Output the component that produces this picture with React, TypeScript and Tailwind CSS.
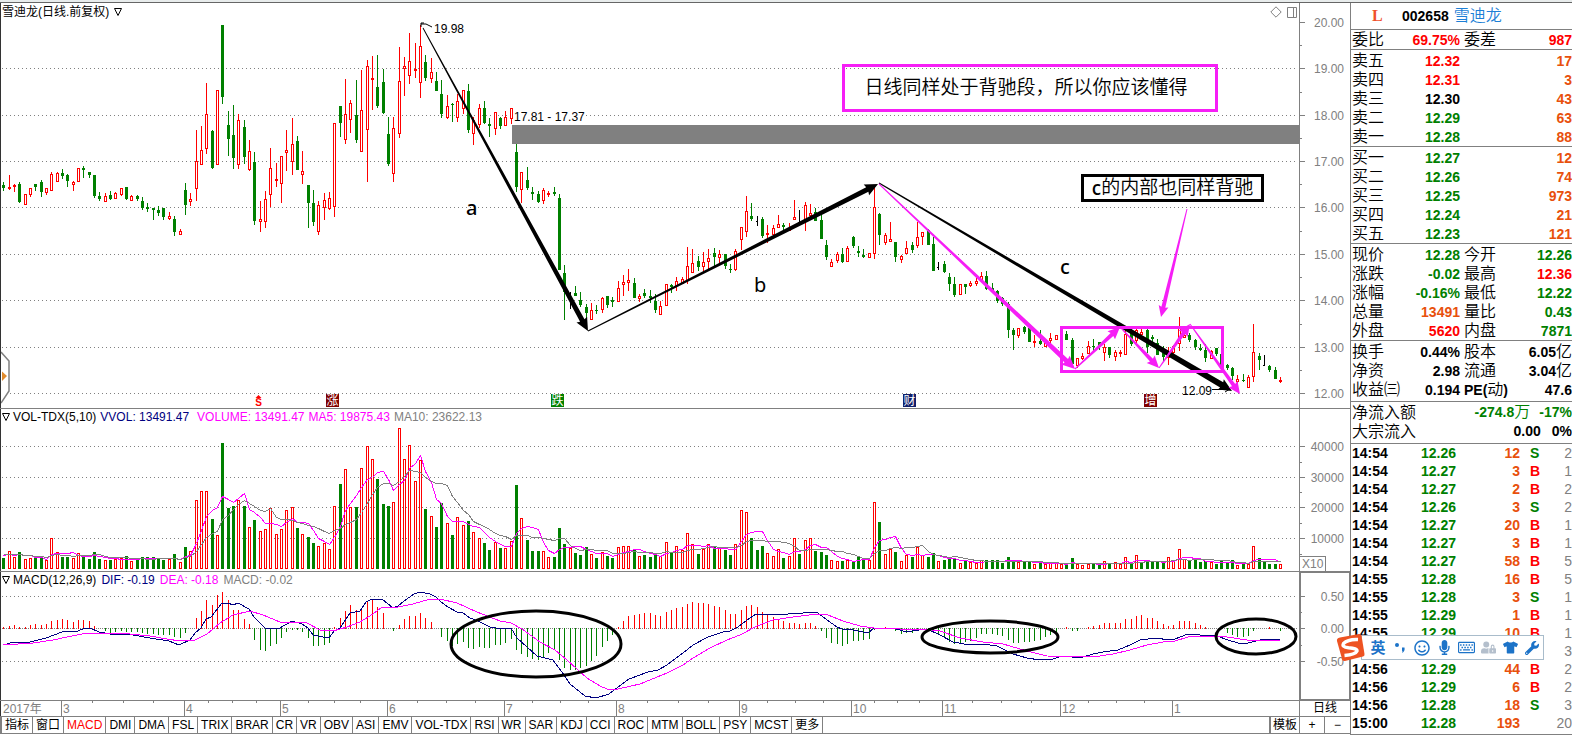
import React from 'react';
import { FaMicrophone, FaRegKeyboard, FaRegSmile, FaTshirt, FaUserLock, FaWrench } from 'react-icons/fa';

const RED = '#ff0000';
const GREEN = '#008000';
const GRAY = '#808080';
const PINK = '#f61ef6';

// one entry per day: kind, high, body top, body bottom, low
// r = rising (hollow), g = falling (filled), k = unchanged
const CANDLES = `
g 182 185 188 191;r 175 187 188 190;r 184 185 186 192;g 182 184 202 203;r 194 194 204 204;r 188 188 194 197;g 184 184 187 191;g 180 182 192 197;
r 188 188 192 195;r 172 174 190 191;r 172 173 181 181;g 169 173 176 179;g 174 175 181 187;r 181 182 184 191;r 168 168 181 181;g 166 168 170 178;
g 172 172 175 178;g 175 175 196 198;g 192 196 199 201;r 193 196 201 201;g 191 195 199 200;r 192 193 198 199;r 188 188 194 196;g 187 187 199 200;
r 195 196 200 200;g 195 196 199 201;g 197 201 208 210;g 203 207 209 212;g 208 208 210 220;g 206 210 213 216;g 208 208 217 220;r 212 216 218 220;
g 216 219 232 236;r 229 231 234 234;g 183 190 205 215;r 193 199 201 206;r 130 161 188 201;r 126 150 164 164;r 83 114 148 154;g 130 131 168 169;
r 90 90 164 164;g 25 25 97 104;g 111 125 139 156;g 105 135 158 169;r 114 120 164 169;g 120 127 157 164;r 140 151 169 171;g 152 162 221 225;
r 201 219 221 232;r 191 199 221 228;r 148 168 194 207;r 163 179 180 187;r 156 156 183 203;r 130 150 152 171;r 118 144 161 175;g 136 141 170 170;
r 151 171 174 184;g 185 185 203 228;g 190 203 222 226;r 201 205 231 235;r 193 200 207 220;r 192 198 208 210;r 123 123 206 217;g 106 106 123 137;
r 79 114 139 144;r 100 103 119 133;g 80 115 140 143;r 70 110 151 151;r 60 66 129 182;r 56 78 79 110;g 55 87 106 108;g 69 82 113 114;
g 117 134 164 166;r 117 128 173 182;r 47 81 133 138;r 57 66 68 96;r 33 61 75 84;r 43 69 70 78;r 25 46 82 98;g 55 62 78 81;
r 58 72 78 83;g 72 81 91 91;g 80 94 114 118;r 95 106 117 119;g 103 104 105 122;r 94 101 117 122;r 90 90 108 114;g 84 91 130 133;
r 117 120 133 145;r 104 108 124 128;g 101 108 123 124;g 118 124 126 137;r 112 112 128 135;g 117 118 126 129;r 111 117 125 125;r 108 108 118 124;
g 144 152 187 192;r 172 172 189 203;g 167 180 188 190;g 187 192 194 200;g 191 194 202 203;r 188 190 200 204;r 191 193 194 197;g 187 192 194 196;
g 194 198 270 270;g 265 273 292 320;k 292 299 300 309;g 286 293 296 296;g 292 300 305 307;g 304 307 313 321;r 303 310 319 319;g 305 310 311 314;
r 297 298 309 313;g 296 296 305 308;g 297 300 302 307;r 281 288 301 301;r 275 282 284 296;r 269 280 282 291;g 278 283 298 298;r 294 296 298 302;
g 289 293 296 298;g 290 296 298 303;g 294 301 310 313;r 301 306 314 314;r 284 284 305 305;g 284 285 287 293;r 277 281 285 291;r 277 279 283 283;
r 247 266 280 284;r 249 263 272 272;g 256 261 267 271;r 252 262 266 272;r 249 258 261 270;g 248 253 257 266;r 250 254 257 263;g 254 254 266 269;
g 264 269 270 273;r 249 251 269 271;r 227 227 239 250;r 196 211 231 237;g 203 216 219 221;k 216 221 222 226;g 217 219 236 238;r 225 233 234 243;
r 225 228 234 236;r 215 224 227 228;g 223 225 227 230;r 223 228 230 231;r 200 217 219 220;k 210 222 223 225;r 202 205 219 231;r 204 213 215 217;
g 208 212 221 221;g 215 220 239 239;g 240 245 257 260;r 259 262 266 267;r 252 254 260 263;g 248 254 262 263;r 246 248 261 262;g 236 237 246 248;
g 246 251 253 257;g 249 255 257 258;r 253 253 257 258;r 187 207 253 259;g 213 214 235 245;r 233 235 242 245;r 222 239 241 242;g 242 242 257 262;
r 255 256 259 263;r 241 248 253 254;g 242 245 250 253;r 222 237 245 248;r 232 232 236 245;g 229 230 245 245;g 237 244 271 271;k 262 267 268 270;
g 261 264 272 273;g 273 277 284 291;g 277 284 295 297;r 284 284 294 295;g 284 284 287 294;r 281 283 285 287;r 278 281 283 286;r 272 276 280 281;
g 271 276 289 290;g 283 288 291 293;g 290 291 301 303;g 297 298 304 306;g 302 304 330 338;g 328 330 335 350;r 328 328 335 338;g 326 327 332 334;
g 327 328 342 342;r 335 341 342 347;g 330 341 344 345;r 340 343 346 347;r 333 338 340 344;r 335 335 339 340;r 336 337 338 339;g 331 334 340 340;
g 338 340 364 366;r 358 358 365 368;r 353 356 358 360;r 341 346 353 354;g 339 346 347 352;g 342 342 347 350;r 344 347 352 361;g 347 347 355 358;
r 350 352 356 361;r 350 352 353 357;r 330 334 354 355;g 328 331 344 346;r 328 330 340 346;r 328 332 334 336;g 328 330 347 353;g 335 337 339 345;
g 339 343 355 355;g 346 353 357 362;r 347 353 357 365;r 345 346 352 355;r 317 328 343 351;r 330 335 337 338;g 333 335 340 342;g 339 340 347 350;
g 344 348 350 351;g 344 350 358 362;r 350 351 358 358;g 348 348 354 356;g 353 354 366 370;g 364 365 368 370;g 367 368 376 380;r 375 379 381 384;
g 374 380 381 382;r 375 377 387 387;r 324 352 376 382;g 353 356 360 370;k 355 365 366 366;g 365 366 370 372;g 367 370 379 379;r 377 380 381 383`
  .trim()
  .split(';')
  .map((row) => {
    const [kind, ...ys] = row.trim().split(' ');
    const [high, top, bottom, low] = ys.map(Number);
    return { kind, high, top, bottom, low };
  });

const VOLUMES = [
  558, 551, 557, 552, 559, 558, 558, 558, 560, 538, 552, 557, 557, 558, 553, 555, 559, 552, 559, 560, 560, 559, 558, 556,
  561, 560, 557, 557, 557, 559, 560, 559, 554, 562, 547, 551, 500, 491, 491, 519, 535, 443, 508, 506, 500, 506, 527, 520,
  531, 529, 508, 534, 529, 510, 507, 528, 534, 537, 543, 546, 543, 549, 506, 484, 469, 507, 507, 468, 446, 459, 479, 504,
  506, 502, 428, 459, 445, 481, 460, 509, 516, 527, 503, 523, 535, 517, 525, 521, 532, 538, 543, 550, 542, 548, 548, 541,
  485, 518, 540, 551, 551, 551, 557, 557, 528, 544, 548, 553, 555, 547, 554, 558, 552, 556, 558, 547, 546, 546, 550, 556,
  555, 557, 554, 556, 542, 553, 546, 550, 533, 544, 554, 549, 544, 547, 548, 550, 555, 544, 510, 512, 538, 550, 546, 553,
  556, 549, 558, 556, 538, 554, 540, 538, 551, 552, 555, 560, 561, 561, 560, 561, 556, 558, 560, 502, 522, 554, 549, 552,
  561, 555, 557, 547, 555, 557, 553, 561, 560, 559, 559, 563, 561, 562, 563, 560, 560, 560, 560, 563, 557, 560, 562, 562,
  562, 564, 562, 564, 563, 563, 564, 564, 558, 564, 565, 564, 564, 564, 561, 563, 562, 564, 557, 563, 555, 562, 562, 562,
  562, 562, 557, 560, 549, 559, 561, 560, 562, 561, 562, 564, 561, 563, 560, 565, 564, 564, 546, 558, 562, 564, 564, 564,
];

// unchanged days still get a coloured volume bar
const VOLUME_KIND: Record<number, string> = { 106: 'r', 141: 'g', 149: 'g', 175: 'r', 213: 'g', 236: 'g' };

const MACD_BARS = [
  627, 626, 625, 627, 627, 625, 624, 625, 624, 621, 620, 619, 620, 622, 620, 620, 621, 626, 628, 630, 632, 631, 630, 631,
  631, 631, 632, 633, 633, 634, 634, 634, 636, 637, 632, 628, 618, 611, 600, 605, 595, 592, 600, 610, 610, 619, 624, 639,
  649, 650, 645, 643, 637, 631, 629, 629, 631, 637, 645, 645, 644, 642, 627, 618, 611, 605, 610, 610, 601, 600, 607, 613,
  628, 630, 625, 619, 616, 616, 613, 618, 622, 628, 636, 640, 645, 643, 641, 647, 648, 646, 647, 647, 644, 644, 642, 638,
  649, 653, 656, 658, 659, 656, 652, 649, 659, 667, 669, 669, 667, 665, 660, 655, 646, 640, 634, 627, 621, 616, 615, 614,
  613, 613, 615, 616, 612, 610, 608, 607, 604, 602, 603, 603, 604, 606, 607, 610, 614, 614, 610, 606, 605, 607, 612, 615,
  617, 619, 621, 623, 623, 624, 623, 623, 626, 630, 637, 642, 643, 645, 643, 640, 640, 639, 638, 629, 628, 627, 628, 630,
  633, 632, 632, 630, 628, 630, 632, 634, 637, 641, 643, 642, 641, 640, 637, 633, 633, 633, 634, 635, 639, 642, 642, 641,
  641, 640, 639, 636, 634, 631, 628, 627, 630, 630, 628, 627, 626, 625, 623, 623, 623, 623, 619, 619, 616, 615, 618, 618,
  621, 624, 626, 625, 621, 621, 621, 623, 625, 627, 628, 628, 628, 632, 634, 636, 636, 635, 630, 628, 628, 627, 628, 630,
];

const DIF =
  '3,645 14,642 30,642 46,638 62,632 78,631 85,628 90,628 99,632 110,634 133,635 150,638 169,641 179,645 190,640 195,633 201,628 206,619 211,617 222,603 228,603 233,605 238,603 249,609 254,617 265,628 278,629 292,621 302,624 308,628 313,635 323,637 329,638 334,631 340,628 350,613 360,611 366,602 372,599 382,599 393,608 398,606 404,601 414,594 420,592 430,594 436,597 441,602 448,607 457,612 463,613 470,618 478,621 490,627 502,629 511,628 517,638 527,647 537,656 553,660 564,675 570,684 585,696 596,698 609,694 617,688 629,679 648,672 658,670 667,665 683,653 693,645 708,637 723,632 730,631 738,627 747,620 756,614 767,615 788,614 803,613 810,612 818,613 827,620 837,627 842,629 853,630 868,633 874,628 893,628 903,631 912,631 927,629 940,635 953,642 970,645 983,644 997,646 1013,654 1027,658 1040,660 1053,659 1062,656 1072,657 1083,657 1093,654 1103,652 1118,650 1130,645 1140,640 1157,638 1168,640 1175,639 1188,634 1200,635 1217,636 1228,640 1238,643 1248,643 1260,640 1272,639 1280,640';

const DEA =
  '3,645 33,643 53,640 67,637 87,633 107,633 130,634 150,636 167,639 180,641 195,640 207,634 220,623 233,615 250,611 263,615 280,622 307,623 320,630 333,631 347,627 360,622 373,614 382,607 398,607 413,604 430,599 440,599 457,603 477,612 500,621 511,623 522,629 540,642 555,650 567,660 587,678 600,686 607,689 618,689 640,684 667,673 683,665 693,658 710,648 727,640 740,635 757,626 773,620 793,617 817,614 828,615 843,621 860,626 874,628 900,629 923,629 940,631 960,638 983,642 1003,644 1027,651 1047,656 1093,657 1113,654 1130,650 1147,645 1163,642 1175,641 1188,637 1203,636 1227,637 1247,640 1280,640';

const MONTHS: [number, string][] = [
  [61, '3'], [184, '4'], [280, '5'], [387, '6'], [504, '7'], [616, '8'],
  [739, '9'], [851, '10'], [942, '11'], [1060, '12'], [1172, '1'],
];

const WEEK_TICKS = [
  92, 123, 153, 208, 232, 256, 308, 334, 360, 417, 446, 475, 532, 560, 588, 647, 678, 708,
  767, 795, 823, 874, 897, 919, 972, 1001, 1031, 1088, 1116, 1144,
];

const PRICE_GRID: [number, string][] = [
  [22, '20.00'], [68, '19.00'], [115, '18.00'], [161, '17.00'], [207, '16.00'],
  [254, '15.00'], [300, '14.00'], [347, '13.00'], [393, '12.00'],
];
const VOLUME_GRID: [number, string][] = [[446, '40000'], [477, '30000'], [507, '20000'], [538, '10000']];
const MACD_GRID: [number, string][] = [[596, '0.50'], [628, '0.00'], [661, '-0.50']];

const INDICATORS = [
  '指标', '窗口', 'MACD', 'DMI', 'DMA', 'FSL', 'TRIX', 'BRAR', 'CR', 'VR', 'OBV', 'ASI', 'EMV', 'VOL-TDX',
  'RSI', 'WR', 'SAR', 'KDJ', 'CCI', 'ROC', 'MTM', 'BOLL', 'PSY', 'MCST', '更多',
];

type Quote = [string, string, string, string?, string?, string?];

const R = 'text-[#ff0000]';
const G = 'text-[#008000]';
const O = 'text-[#e8500c]';
const K = 'text-black';

const COMMISSION: Quote[] = [['委比', '69.75%', R, '委差', '987', R]];
const ASKS: Quote[] = [
  ['卖五', '12.32', R, '', '17', O],
  ['卖四', '12.31', R, '', '3', O],
  ['卖三', '12.30', K, '', '43', O],
  ['卖二', '12.29', G, '', '63', O],
  ['卖一', '12.28', G, '', '88', O],
];
const BIDS: Quote[] = [
  ['买一', '12.27', G, '', '12', O],
  ['买二', '12.26', G, '', '74', O],
  ['买三', '12.25', G, '', '973', O],
  ['买四', '12.24', G, '', '21', O],
  ['买五', '12.23', G, '', '121', O],
];
const SUMMARY: Quote[] = [
  ['现价', '12.28', G, '今开', '12.26', G],
  ['涨跌', '-0.02', G, '最高', '12.36', R],
  ['涨幅', '-0.16%', G, '最低', '12.22', G],
  ['总量', '13491', O, '量比', '0.43', G],
  ['外盘', '5620', R, '内盘', '7871', G],
];
const FUNDAMENTALS: Quote[] = [
  ['换手', '0.44%', K, '股本', '6.05亿', K],
  ['净资', '2.98', K, '流通', '3.04亿', K],
  ['收益㈢', '0.194', K, 'PE(动)', '47.6', K],
];

const TRADES = [
  ['14:54', '12.26', '12', 'S', '2'],
  ['14:54', '12.27', '3', 'B', '1'],
  ['14:54', '12.27', '2', 'B', '2'],
  ['14:54', '12.26', '3', 'S', '2'],
  ['14:54', '12.27', '20', 'B', '1'],
  ['14:54', '12.27', '3', 'B', '1'],
  ['14:54', '12.27', '58', 'B', '5'],
  ['14:55', '12.28', '16', 'B', '5'],
  ['14:55', '12.28', '3', 'S', '1'],
  ['14:55', '12.29', '1', 'B', '1'],
  ['14:55', '12.29', '10', 'B', '1'],
  ['', '', '', '', '3'],
  ['14:56', '12.29', '44', 'B', '2'],
  ['14:56', '12.29', '6', 'B', '2'],
  ['14:56', '12.28', '18', 'S', '3'],
  ['15:00', '12.28', '193', '', '20'],
];

const dayX = (i: number) => Math.floor(3.7 + 5.343 * i);

// moving average over the bar tops, padded on the left with a flat lead-in
const movingAverage = (days: number) => {
  const padded = [...Array(days).fill(554), ...VOLUMES];
  return VOLUMES.map((_, i) => {
    const slice = padded.slice(i + 1, i + 1 + days);
    const y = slice.reduce((sum, v) => sum + v, 0) / days;
    return `${dayX(i) + 0.5},${Math.round(y) + 0.5}`;
  }).join(' ');
};

const GridLine: React.FC<{ y: number; dash?: string }> = ({ y, dash = '1 3' }) => (
  <line x1="2" x2="1297" y1={y + 0.5} y2={y + 0.5} stroke={GRAY} strokeDasharray={dash} />
);

interface TaperArrowProps {
  from: [number, number];
  to: [number, number];
  width: number;
  head: number;
  color: string;
}

// arrow that starts as a hairline and widens towards its head
const TaperArrow: React.FC<TaperArrowProps> = ({ from, to, width, head, color }) => {
  const [x1, y1] = from;
  const [x2, y2] = to;
  const len = Math.hypot(x2 - x1, y2 - y1);
  const ux = (x2 - x1) / len;
  const uy = (y2 - y1) / len;
  const at = (along: number, side: number) =>
    `${(x1 + ux * along - uy * side).toFixed(1)},${(y1 + uy * along + ux * side).toFixed(1)}`;
  const neck = len - head;
  const points = [
    at(0, -0.5), at(neck, -width / 2), at(neck - 1, -head / 2), at(len, 0),
    at(neck - 1, head / 2), at(neck, width / 2), at(0, 0.5),
  ];
  return <polygon points={points.join(' ')} fill={color} />;
};

const Marker: React.FC<{ x: number; label: string; color: string }> = ({ x, label, color }) => (
  <g>
    <rect x={x} y="394" width="13" height="13" fill={color} />
    <text x={x + 6.5} y="405" fontSize="12" textAnchor="middle" fill="#fff">{label}</text>
  </g>
);

const PricePlot = () => (
  <svg className="block h-[387px] w-full" viewBox="1 21 1298 387" preserveAspectRatio="none">
    <g shapeRendering="crispEdges">
      {PRICE_GRID.slice(1).map(([y]) => <GridLine key={y} y={y} />)}
      <rect x="512" y="125" width="787" height="19" fill={GRAY} />
      {CANDLES.map(({ kind, high, top, bottom, low }, i) => {
        const x = dayX(i);
        if (kind === 'r') {
          return (
            <g key={i}>
              <rect x={x} y={high} width="1" height={Math.max(low, bottom + 1) - high} fill={RED} />
              <rect x={x - 1} y={top} width="3" height={bottom + 1 - top} fill={RED} />
              {bottom - top > 1 && <rect x={x} y={top + 1} width="1" height={bottom - top - 1} fill="#fff" />}
            </g>
          );
        }
        const fill = kind === 'g' ? GREEN : '#000';
        return (
          <g key={i}>
            <rect x={x} y={high} width="1" height={low - high} fill={fill} />
            <rect x={x - 1} y={top} width={kind === 'g' ? 3 : 2} height={bottom - top} fill={fill} />
          </g>
        );
      })}
      <rect x="514" y="111" width="72" height="12" fill="#fff" />
    </g>

    <g fontSize="12" fill="#000">
      <text x="434" y="33">19.98</text>
      <text x="514" y="121">17.81 - 17.37</text>
      <text x="1182" y="395">12.09</text>
    </g>
    <path d="M421 24h5l6 3M421 27v-4h3M1212 389.5h17M1225 387l4 2.5-4 2.5" fill="none" stroke="#000" />

    <Marker x={326} label="涨" color="#800000" />
    <Marker x={551} label="跌" color={GREEN} />
    <Marker x={903} label="财" color="#101f6b" />
    <Marker x={1144} label="增" color="#800000" />
    <path d="M255.5 398l3-3 3 3z" fill={RED} />
    <text x="258.5" y="406" fontSize="10" fontWeight="700" textAnchor="middle" fill={RED}>S</text>

    <path d="M1 352L9 361v30L1 403" fill="#fff" stroke={GRAY} strokeWidth="1.5" />
    <path d="M2 371.5l5 4.5-5 5z" fill="#e08a2c" />

    <TaperArrow from={[423, 28]} to={[588, 331]} width={5} head={12} color="#000" />
    <TaperArrow from={[588, 331]} to={[878, 184]} width={5} head={12} color="#000" />
    <TaperArrow from={[879, 183]} to={[1232, 391]} width={6} head={12} color="#000" />
    <rect x="1061.5" y="327.5" width="161" height="44" fill="none" stroke={PINK} strokeWidth="3" />
    <TaperArrow from={[879, 184]} to={[1075, 369]} width={5} head={12} color={PINK} />
    <TaperArrow from={[1075, 369]} to={[1120, 327]} width={4} head={11} color={PINK} />
    <TaperArrow from={[1120, 327]} to={[1159, 368]} width={4} head={11} color={PINK} />
    <TaperArrow from={[1159, 368]} to={[1190, 324]} width={4} head={11} color={PINK} />
    <TaperArrow from={[1190, 324]} to={[1240, 394]} width={4} head={11} color={PINK} />
    <TaperArrow from={[1187, 209]} to={[1161, 317]} width={4} head={10} color={PINK} />

    <g fontSize="20" fill="#000" fontFamily="Noto Sans, sans-serif">
      <text x="466" y="215" fontWeight="500">a</text>
      <text x="754" y="292">b</text>
      <text x="1060" y="274" fontWeight="500">c</text>
    </g>
  </svg>
);

const VolumePlot = () => (
  <svg className="block h-[146px] w-full" viewBox="1 425 1298 146" preserveAspectRatio="none" shapeRendering="crispEdges">
    {VOLUME_GRID.map(([y]) => <GridLine key={y} y={y} />)}
    {VOLUMES.map((top, i) => {
      const rising = (VOLUME_KIND[i] ?? CANDLES[i].kind) === 'r';
      const x = dayX(i) - 1;
      return (
        <g key={i}>
          <rect x={x} y={top} width="3" height={569 - top} fill={rising ? RED : GREEN} />
          {rising && <rect x={x + 1} y={top + 1} width="1" height={567 - top} fill="#fff" />}
        </g>
      );
    })}
    <polyline points={movingAverage(5)} fill="none" stroke="#ff00ff" />
    <polyline points={movingAverage(10)} fill="none" stroke={GRAY} />
  </svg>
);

const MacdPlot = () => (
  <svg className="block h-[112px] w-full" viewBox="1 588 1298 112" preserveAspectRatio="none">
    <g shapeRendering="crispEdges">
      <GridLine y={596} />
      <GridLine y={628} dash="1 1" />
      <GridLine y={661} />
      {MACD_BARS.map((y, i) =>
        y === 628 ? null : (
          <rect key={i} x={dayX(i)} y={Math.min(y, 628)} width="1" height={Math.abs(y - 628) + 1} fill={y < 628 ? RED : GREEN} />
        ),
      )}
      <polyline points={DIF} fill="none" stroke="#000080" />
      <polyline points={DEA} fill="none" stroke="#ff00ff" />
    </g>
    <g fill="none" stroke="#000" strokeWidth="3">
      <ellipse cx="536" cy="644" rx="85" ry="33" />
      <ellipse cx="990" cy="637" rx="68" ry="16" />
      <ellipse cx="1256" cy="636.5" rx="40" ry="17.5" />
    </g>
  </svg>
);

interface AxisProps {
  className: string;
  viewBox: string;
  labels: [number, string][];
  minor: number[];
}

const Axis: React.FC<AxisProps> = ({ className, viewBox, labels, minor }) => (
  <svg className={className} viewBox={viewBox} preserveAspectRatio="none" fontSize="12" fill={GRAY}>
    {labels.map(([y, text]) => (
      <g key={y}>
        <rect x="1299" y={y} width="6" height="1" />
        <text x="1344" y={y + 5} textAnchor="end">{text}</text>
      </g>
    ))}
    {minor.map((y) => <rect key={y} x="1299" y={y} width="3" height="1" />)}
  </svg>
);

const Fold = () => (
  <svg className="h-[10px] w-[8px]" viewBox="0 0 8 10" fill="none" stroke="#000">
    <path d="M.5 1.5h7L4 8.5z" />
  </svg>
);

// digits are bold, Chinese units are not
const Value: React.FC<{ text: string }> = ({ text }) => {
  const unit = text.match(/[亿万]$/)?.[0];
  if (!unit) return <>{text}</>;
  return <>{text.slice(0, -1)}<span className="text-[16px] leading-none font-[350]">{unit}</span></>;
};

const QuoteTable: React.FC<{ rows: Quote[]; className: string }> = ({ rows, className }) => (
  <div className={`border-b border-[#808080] pl-px ${className}`}>
    <table className="w-full table-fixed border-collapse text-[14px] leading-[18px] font-bold">
      <colgroup>
        <col className="w-[50px]" />
        <col className="w-[58px]" />
        <col className="w-[54px]" />
        <col />
      </colgroup>
      <tbody>
        {rows.map(([label, value, tone, label2, value2, tone2]) => (
          <tr key={label} className="h-[19px]">
            <th className="p-0 text-left text-[16px] font-[350] whitespace-nowrap">{label}</th>
            <td className={`p-0 text-right ${tone}`}>{value}</td>
            <th className="p-0 pl-[4px] text-left font-[350] whitespace-nowrap">
              {label2 === 'PE(动)' ? (
                <>
                  <span className="font-bold">PE(</span>
                  <span className="text-[16px] leading-none">动</span>
                  <span className="font-bold">)</span>
                </>
              ) : (
                <span className="text-[16px]">{label2}</span>
              )}
            </th>
            <td className={`p-0 text-right whitespace-nowrap ${tone2}`}><Value text={value2 ?? ''} /></td>
          </tr>
        ))}
      </tbody>
    </table>
  </div>
);

const Sidebar = () => (
  <aside className="flex w-[222px] shrink-0 flex-col overflow-hidden border-l border-[#808080]">
    <div className="flex h-[27px] items-center border-b border-[#808080] pl-[21px] text-[14px] font-bold">
      <span className="w-[30px] font-['Liberation_Serif',serif] text-[16px] text-[#f0502c]">L</span>
      <span>002658</span>
      <a href="#stock" className="ml-[5px] text-[16px] font-[350] text-[#1c7fd6]">雪迪龙</a>
    </div>
    <QuoteTable rows={COMMISSION} className="" />
    <QuoteTable rows={ASKS} className="pt-px" />
    <QuoteTable rows={BIDS} className="pt-px" />
    <QuoteTable rows={SUMMARY} className="pt-px" />
    <QuoteTable rows={FUNDAMENTALS} className="pt-px pb-[2px]" />
    <div className="border-b border-[#808080] pt-px pb-[2px] pl-px text-[14px] leading-[19px] font-bold">
      <div className="flex h-[19px] justify-between">
        <span className="text-[16px] font-[350]">净流入额</span>
        <span className="flex gap-[9px] text-[#008000]"><span><Value text="-274.8万" /></span><span>-17%</span></span>
      </div>
      <div className="flex h-[19px] justify-between">
        <span className="text-[16px] font-[350]">大宗流入</span>
        <span className="flex gap-[11px]"><span>0.00</span><span>0%</span></span>
      </div>
    </div>
    <div className="flex-1 border-b border-[#808080] pb-[2px] pl-px">
      <table className="w-full table-fixed border-collapse text-[14px] leading-[17px] font-bold">
        <colgroup>
          <col className="w-[50px]" />
          <col className="w-[54px]" />
          <col className="w-[64px]" />
          <col className="w-[28px]" />
          <col />
        </colgroup>
        <tbody>
          {TRADES.map(([time, price, lots, side, deals], i) => (
            <tr key={i} className="h-[18px]">
              <td className="p-0">{time}</td>
              <td className="p-0 text-right text-[#008000]">{price}</td>
              <td className="p-0 text-right text-[#e8500c]">{lots}</td>
              <td className={`p-0 pl-[10px] ${side === 'S' ? G : R}`}>{side}</td>
              <td className="p-0 text-right font-normal text-[#808080]">{deals}</td>
            </tr>
          ))}
        </tbody>
      </table>
    </div>
  </aside>
);

const ImeBar = () => (
  <div className="absolute top-[633px] right-[28px] flex items-center text-[#1c73c8]">
    <svg className="z-10 -mr-[4px] h-[29px] w-[29px]" viewBox="0 0 29 29">
      <path d="M4 4.5L23 1q2-.3 2.5 1.5L28.5 21q.3 2-1.5 2.5L9 28q-2 .4-2.8-1.5L1 8q-.6-2.6 3-3.5z" fill="#ee5322" />
      <path d="M22 6.5Q12 6 7.5 10.5q-2 3.5 5 4.3 9 .6 8.5 3.2-1.5 3.5-12.5 4.5" fill="none" stroke="#fff" strokeWidth="3.4" />
    </svg>
    <div className="flex h-[25px] items-center border border-[#a9bccb] bg-white pl-[5px]">
      <button className="w-[22px] text-[15px] leading-none font-bold">英</button>
      <button className="flex w-[22px] justify-center" aria-label="标点">
        <svg className="h-[12px] w-[12px]" viewBox="0 0 12 12">
          <circle cx="3" cy="3" r="2" fill="currentColor" />
          <path d="M8 5.5h2.5q.8 3.5-2.5 5.5 1-2 0-2.5z" fill="currentColor" />
        </svg>
      </button>
      <button className="flex w-[22px] justify-center" aria-label="表情"><FaRegSmile size={16} /></button>
      <button className="flex w-[22px] justify-center" aria-label="语音"><FaMicrophone size={15} /></button>
      <button className="flex w-[22px] justify-center" aria-label="键盘"><FaRegKeyboard size={17} /></button>
      <button className="flex w-[22px] justify-center text-[#b4bfcc]" aria-label="登录"><FaUserLock size={15} /></button>
      <button className="flex w-[22px] justify-center" aria-label="皮肤"><FaTshirt size={15} /></button>
      <button className="flex w-[22px] justify-center" aria-label="工具"><FaWrench size={14} /></button>
    </div>
  </div>
);

const App: React.FC = () => {
  return (
    <div className="relative bg-white font-['Liberation_Sans','Noto_Sans_CJK_SC',sans-serif] text-[12px] text-black">
      <div className="h-[3px] border-b border-[#666666] bg-[#e8ecec]" />
      <div className="flex">
        <main className="min-w-0 flex-1">
          {/* price */}
          <section className="flex border-b border-[#808080]">
            <div className="min-w-0 flex-1 border-l border-[#333333]">
              <header className="flex h-[18px] items-center gap-[5px] pl-px">
                <h1>雪迪龙(日线.前复权)</h1>
                <Fold />
                <button className="ml-auto" aria-label="标记">
                  <svg className="h-[12px] w-[12px]" viewBox="0 0 12 12" fill="none" stroke={GRAY}><path d="M6 .8L11.2 6 6 11.2.8 6z" /></svg>
                </button>
                <button className="mr-px" aria-label="侧栏">
                  <svg className="h-[11px] w-[11px]" viewBox="0 0 11 11" fill="none" stroke={GRAY}><path d="M.5.5h9v10h-9zM6.5.5v10" /></svg>
                </button>
              </header>
              <PricePlot />
            </div>
            <div className="w-[51px] border-l border-[#808080]">
              <Axis
                className="block h-[405px] w-full"
                viewBox="1300 3 50 405"
                labels={PRICE_GRID}
                minor={[45, 92, 138, 184, 231, 277, 324, 370]}
              />
            </div>
          </section>

          {/* volume */}
          <section className="flex border-b border-[#808080]">
            <div className="min-w-0 flex-1 border-l border-[#333333]">
              <header className="flex h-[16px] items-center gap-[4px] pl-px whitespace-nowrap">
                <span className="flex items-center gap-[3px]"><Fold />VOL-TDX(5,10)</span>
                <span className="text-[#000080]">VVOL: 13491.47</span>
                <span className="pl-[4px] text-[#ff00ff]">VOLUME: 13491.47</span>
                <span className="text-[#ff00ff]">MA5: 19875.43</span>
                <span className="text-[#808080]">MA10: 23622.13</span>
              </header>
              <VolumePlot />
            </div>
            <div className="flex w-[51px] flex-col border-l border-[#808080] text-[#808080]">
              <Axis
                className="block h-[147px] w-full"
                viewBox="1300 409 50 147"
                labels={VOLUME_GRID}
                minor={[462, 492, 523, 554]}
              />
              <span className="h-[15px] w-[26px] border-t border-r border-[#808080] pl-[2px] leading-[15px]">X10</span>
            </div>
          </section>

          {/* macd */}
          <section className="flex border-b border-[#808080]">
            <div className="min-w-0 flex-1 border-l border-[#333333]">
              <header className="flex h-[16px] items-center gap-[5px] pl-px whitespace-nowrap">
                <span className="flex items-center gap-[3px]"><Fold />MACD(12,26,9)</span>
                <span className="text-[#000080]">DIF: -0.19</span>
                <span className="text-[#ff00ff]">DEA: -0.18</span>
                <span className="text-[#808080]">MACD: -0.02</span>
              </header>
              <MacdPlot />
            </div>
            <div className="w-[51px] border border-l-2 border-[#808080]">
              <Axis className="block h-[126px] w-full" viewBox="1301 573 48 126" labels={MACD_GRID} minor={[612, 645]} />
            </div>
          </section>

          <div className="flex h-[16px] border-b border-[#808080]">
            <div className="min-w-0 flex-1 border-l border-[#333333]">
              <svg className="block h-[15px] w-full" viewBox="1 701 1298 15" preserveAspectRatio="none" fill={GRAY}>
                <text x="3" y="713">2017年</text>
                {MONTHS.map(([x, label]) => (
                  <g key={x}>
                    <rect x={x} y="701" width="1" height="15" />
                    <text x={x + 2} y="713">{label}</text>
                  </g>
                ))}
                {WEEK_TICKS.map((x) => <rect key={x} x={x} y="701" width="1" height="2" />)}
              </svg>
            </div>
            <button className="w-[51px] border-l border-[#808080] leading-[15px]">日线</button>
          </div>

          <nav className="flex h-[17px] border-b border-l border-[#808080] leading-[16px]">
            {INDICATORS.map((name, i) => (
              <button
                key={name}
                className={`border-r border-[#808080] px-[3px] whitespace-nowrap ${i === 0 ? 'border-l' : ''} ${name === 'MACD' ? 'text-[#ff0000]' : ''}`}
              >
                {name}
              </button>
            ))}
            <button className="ml-auto w-[30px] border-l-2 border-[#808080]">模板</button>
            <button className="w-[26px] border-x border-[#808080]">+</button>
            <button className="w-[25px]">−</button>
          </nav>
        </main>
        <Sidebar />
      </div>

      <div className="absolute top-[64px] right-[354px] flex h-[48px] w-[376px] items-center justify-center border-3 border-[#f61ef6] pr-[8px] text-[19px] font-[350]">
        日线同样处于背驰段，所以你应该懂得
      </div>
      <div className="absolute top-[174px] right-[308px] flex h-[28px] w-[183px] items-center justify-center border-3 border-black bg-white text-[19px] font-[350]">
        <span className="font-['Noto_Sans',sans-serif] font-medium">c</span>的内部也同样背驰
      </div>
      <ImeBar />
    </div>
  );
};

export default App;
